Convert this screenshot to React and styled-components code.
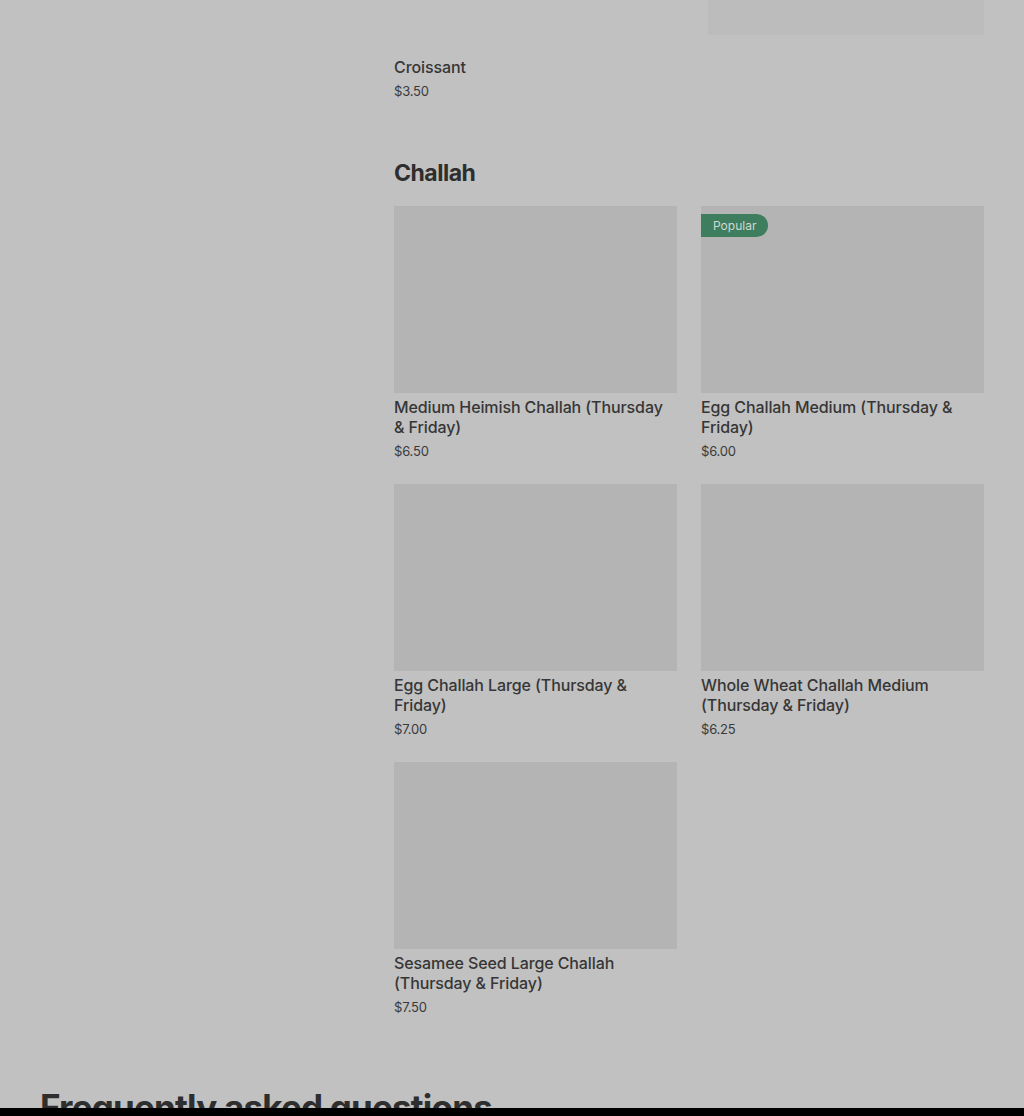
import React from 'react';
import styled, { createGlobalStyle } from 'styled-components';

const GlobalStyle = createGlobalStyle`
  html, body {
    margin: 0;
    padding: 0;
    background: #c1c1c1;
  }
  body {
    font-family: Inter, "Liberation Sans", sans-serif;
    color: #333333;
  }
`;

const Page = styled.div`
  display: grid;
  grid-template-columns: 330px 590px;
  column-gap: 24px;
  padding: 1px 40px 0;
`;

const Sidebar = styled.aside``;

const Menu = styled.main`
  display: flex;
  flex-direction: column;
`;

const Section = styled.section`
  display: flex;
  flex-direction: column;
  margin-top: ${props => props.gap || 0}px;
`;

const SectionTitle = styled.h2`
  margin: 0 0 19px;
  font-size: 23px;
  line-height: 28px;
  font-weight: 700;
  letter-spacing: -0.5px;
  color: #2e2e2e;
`;

const Grid = styled.div`
  display: grid;
  grid-template-columns: 1fr 1fr;
  column-gap: 24px;
  row-gap: 24px;
`;

const Card = styled.div`
  display: flex;
  flex-direction: column;
  padding-top: ${props => props.offset || 0}px;
`;

const Picture = styled.div`
  position: relative;
  height: ${props => props.h || 187}px;
  margin-top: ${props => (props.h ? -1 : 0)}px;
  margin-left: ${props => props.inset || 0}px;
  margin-bottom: 4px;
  background: ${props => (props.faint ? '#bcbcbc' : '#b4b4b4')};
`;

const Badge = styled.span`
  position: absolute;
  top: 8px;
  left: 0;
  height: 23px;
  padding: 0 12px;
  display: flex;
  align-items: center;
  background: #3e7d5d;
  color: #cfd8d3;
  font-size: 12px;
  border-radius: 0 12px 12px 0;
`;

const Name = styled.div`
  font-size: 16px;
  line-height: 20px;
  font-weight: 500;
  letter-spacing: -0.1px;
  color: #363636;
`;

const Price = styled.div`
  margin-top: 5px;
  font-size: 13px;
  line-height: 18px;
  letter-spacing: -0.2px;
  color: #3a3a3a;
`;

const Faq = styled.h2`
  margin: 71px 0 0;
  padding: 0 40px;
  font-size: 35px;
  line-height: 40px;
  font-weight: 700;
  letter-spacing: -0.8px;
  color: #2e2e2e;
`;

const BottomBar = styled.div`
  position: fixed;
  left: 0;
  right: 0;
  bottom: 0;
  height: 8px;
  background: #000;
`;

const challah = [
  { name: 'Medium Heimish Challah (Thursday & Friday)', price: '$6.50' },
  { name: 'Egg Challah Medium (Thursday & Friday)', price: '$6.00', popular: true },
  { name: 'Egg Challah Large (Thursday & Friday)', price: '$7.00' },
  { name: 'Whole Wheat Challah Medium (Thursday & Friday)', price: '$6.25' },
  { name: 'Sesamee Seed Large Challah (Thursday & Friday)', price: '$7.50' },
];

export default function App() {
  return (
    <>
      <GlobalStyle />
      <Page>
        <Sidebar />
        <Menu>
          <Grid>
            <Card offset={56}>
              <Name>Croissant</Name>
              <Price>$3.50</Price>
            </Card>
            <Card>
              <Picture h={35} inset={7} faint />
            </Card>
          </Grid>
          <Section gap={59}>
            <SectionTitle>Challah</SectionTitle>
            <Grid>
              {challah.map(item => (
                <Card key={item.name}>
                  <Picture>{item.popular && <Badge>Popular</Badge>}</Picture>
                  <Name>{item.name}</Name>
                  <Price>{item.price}</Price>
                </Card>
              ))}
            </Grid>
          </Section>
        </Menu>
      </Page>
      <Faq>Frequently asked questions</Faq>
      <BottomBar />
    </>
  );
}
